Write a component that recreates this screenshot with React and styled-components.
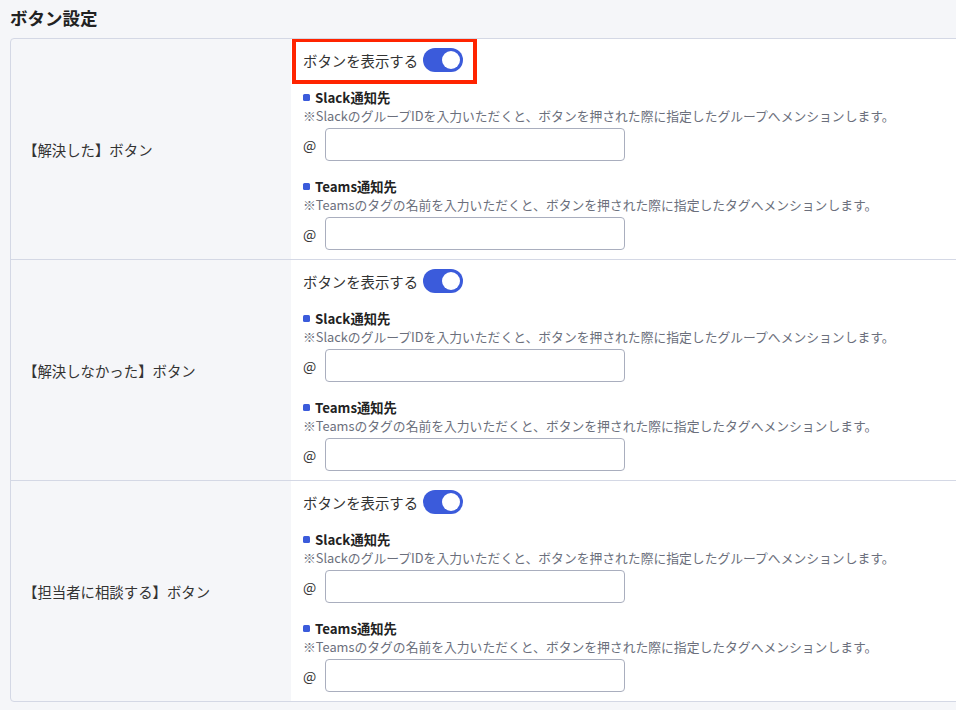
import React, { useState } from "react";
import styled, { createGlobalStyle } from "styled-components";

const GlobalStyle = createGlobalStyle`
  html, body {
    margin: 0;
    padding: 0;
    background: #f5f6f9;
    overflow: hidden;
  }
  body {
    font-family: "Noto Sans CJK JP", "Noto Sans", sans-serif;
    color: #333;
  }
`;

const Page = styled.div`
  padding: 6px 0 0 10px;
  height: 704px;
`;

const Title = styled.h2`
  margin: 0 0 8px;
  font-size: 17.5px;
  line-height: 24px;
  font-weight: 700;
  color: #222;
`;

const Card = styled.div`
  width: 1000px;
  border: 1px solid #d4d8e5;
  border-radius: 4px;
  overflow: hidden;
  background: #f5f6f9;
`;

const Row = styled.div`
  display: grid;
  grid-template-columns: 280px 1fr;
  & + & {
    border-top: 1px solid #d4d8e5;
  }
`;

const LabelCell = styled.div`
  display: flex;
  align-items: center;
  padding: 0 0 0 12px;
  font-size: 14.4px;
  color: #333;
`;

const FieldCell = styled.div`
  position: relative;
  background: #fff;
  padding: 9px 12px 9px;
`;

const ToggleRow = styled.label`
  display: flex;
  align-items: center;
  gap: 5px;
  height: 24px;
  font-size: 14.4px;
  color: #333;
`;

const Switch = styled.button`
  position: relative;
  width: 40px;
  height: 24px;
  padding: 0;
  border: none;
  border-radius: 12px;
  background: ${(p) => (p.on ? "#3b5bdb" : "#c6cad6")};
  cursor: pointer;
  &::after {
    content: "";
    position: absolute;
    top: 3px;
    left: ${(p) => (p.on ? "19px" : "3px")};
    width: 18px;
    height: 18px;
    border-radius: 50%;
    background: #fff;
  }
`;

const Highlight = styled.div`
  position: absolute;
  left: 1px;
  top: -1px;
  width: 185px;
  height: 46px;
  box-sizing: border-box;
  border: 4px solid #ff2400;
  pointer-events: none;
`;

const Section = styled.div`
  margin-top: 16px;
`;

const SectionTitle = styled.div`
  display: flex;
  align-items: center;
  gap: 5px;
  height: 18px;
  font-size: 13.3px;
  font-weight: 700;
  color: #222;
  &::before {
    content: "";
    flex: none;
    width: 7px;
    height: 7px;
    margin-top: 1px;
    border-radius: 1.5px;
    background: #3b5bdb;
  }
`;

const Note = styled.div`
  font-size: 12.8px;
  line-height: 20px;
  color: #6b6f7c;
  white-space: nowrap;
`;

const InputRow = styled.div`
  display: flex;
  align-items: center;
  gap: 9px;
  margin-top: 2px;
  font-size: 14px;
  color: #333;
`;

const Input = styled.input`
  width: 300px;
  height: 33px;
  box-sizing: border-box;
  border: 1px solid #a9aebe;
  border-radius: 4px;
  background: #fff;
  padding: 0 8px;
  font-family: inherit;
  font-size: 14px;
`;

const buttons = [
  { label: "【解決した】ボタン", highlight: true },
  { label: "【解決しなかった】ボタン" },
  { label: "【担当者に相談する】ボタン" },
];

const ButtonSetting = ({ label, highlight }) => {
  const [on, setOn] = useState(true);
  return (
    <Row>
      <LabelCell>{label}</LabelCell>
      <FieldCell>
        <ToggleRow>
          ボタンを表示する
          <Switch type="button" on={on} onClick={() => setOn(!on)} />
        </ToggleRow>
        {highlight && <Highlight />}
        <Section>
          <SectionTitle>Slack通知先</SectionTitle>
          <Note>
            ※SlackのグループIDを入力いただくと、ボタンを押された際に指定したグループへメンションします。
          </Note>
          <InputRow>
            @<Input type="text" />
          </InputRow>
        </Section>
        <Section>
          <SectionTitle>Teams通知先</SectionTitle>
          <Note>
            ※Teamsのタグの名前を入力いただくと、ボタンを押された際に指定したタグへメンションします。
          </Note>
          <InputRow>
            @<Input type="text" />
          </InputRow>
        </Section>
      </FieldCell>
    </Row>
  );
};

const App = () => (
  <>
    <GlobalStyle />
    <Page>
      <Title>ボタン設定</Title>
      <Card>
        {buttons.map((b, i) => (
          <ButtonSetting key={i} label={b.label} highlight={b.highlight} />
        ))}
      </Card>
    </Page>
  </>
);

export default App;
